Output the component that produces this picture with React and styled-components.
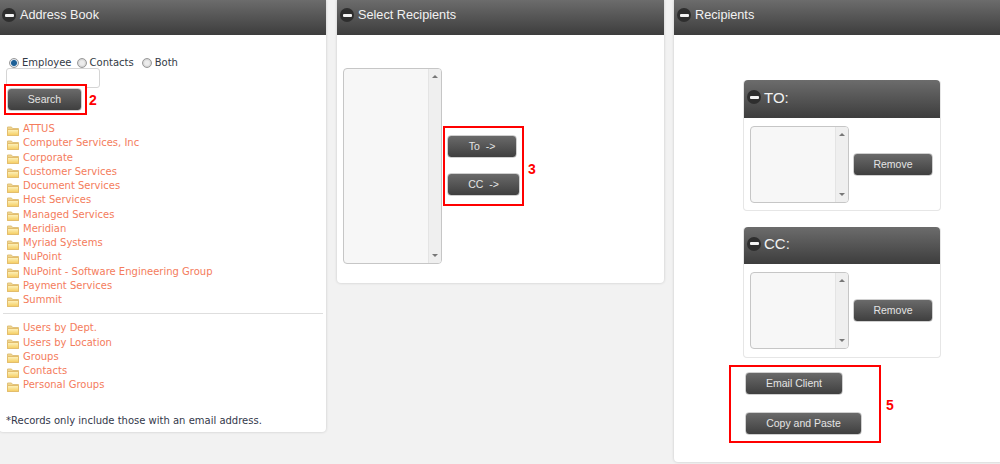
import React from 'react';
import styled, { createGlobalStyle } from 'styled-components';

const GlobalStyle = createGlobalStyle`
  html, body {
    margin: 0;
    padding: 0;
    height: 464px;
    overflow: hidden;
    background: #f2f2f2;
    font-family: 'DejaVu Sans', Verdana, sans-serif;
  }
`;

const Page = styled.div`
  display: flex;
  align-items: flex-start;
  gap: 10px;
  width: 1000px;
  height: 464px;
  overflow: hidden;
`;

// big panels

const Panel = styled.section`
  flex: 0 0 ${(props) => props.width}px;
  height: ${(props) => props.height}px;
  margin-left: ${(props) => props.offset || 0}px;
  background: #fff;
  border-radius: 0 0 4px 4px;
  box-shadow: 0 0 3px rgba(0, 0, 0, 0.18);
  display: flex;
  flex-direction: column;
`;

const PanelHeader = styled.header`
  flex: 0 0 35px;
  display: flex;
  align-items: center;
  gap: 4px;
  padding: 0 0 5px 3px;
  box-sizing: border-box;
  background: linear-gradient(#6c6c6c, #3d3d3d);
  color: #f2f2f2;
  font-family: 'Liberation Sans', Arial, sans-serif;
  font-size: 12.7px;
`;

const CollapseIcon = styled.span`
  flex: none;
  width: 14px;
  height: 14px;
  border-radius: 50%;
  background: #2e2e2e;
  display: flex;
  align-items: center;
  justify-content: center;
  &::after {
    content: '';
    width: 9px;
    height: 3px;
    border-radius: 1px;
    background: #f4f4f4;
  }
`;

const SmallHeader = styled(PanelHeader)`
  flex: 0 0 ${(props) => props.height}px;
  border-radius: 4px 4px 0 0;
  padding: 0 0 4px 3px;
  font-size: 15px;
  gap: 3px;
`;

// address book

const AddressBody = styled.div`
  display: flex;
  flex-direction: column;
  padding: 22px 3px 0 1px;
  font-size: 10px;
  color: #333a45;
`;

const RadioRow = styled.div`
  display: flex;
  align-items: center;
  height: 11px;
  padding-left: 9px;
`;

const RadioLabel = styled.label`
  display: flex;
  align-items: center;
  gap: 3px;
  margin-right: ${(props) => props.space}px;
`;

const Radio = styled.span`
  width: 10px;
  height: 10px;
  border-radius: 50%;
  box-sizing: border-box;
  border: 1px solid #999;
  background: ${(props) => (props.checked
    ? 'radial-gradient(circle, #1c5f96 0 2.5px, #dde5ee 3.5px)'
    : 'radial-gradient(circle, #ececec 0 2px, #c4c4c4 5px)')};
`;

const SearchInput = styled.input`
  display: block;
  width: 94px;
  height: 20px;
  box-sizing: border-box;
  margin: 0 0 0 6px;
  padding: 0;
  border: 1px solid #d5d5d5;
  border-radius: 3px;
  background: #fff;
`;

const SearchBox = styled.div`
  position: relative;
  display: flex;
  box-sizing: border-box;
  width: 83px;
  height: 31px;
  margin: -4px 0 0 4px;
  padding: 2px 0 0 1px;
  border: 2px solid #f00;
  background: #fff;
`;

const Button = styled.button`
  flex: none;
  width: ${(props) => props.width}px;
  height: 23px;
  padding: 0 0 2px;
  border: 1px solid #d0d0d0;
  border-radius: 4px;
  background: linear-gradient(#6a6a6a, #3f3f3f);
  color: #e4e4e4;
  font-family: 'Liberation Sans', Arial, sans-serif;
  font-size: 10.5px;
  text-align: center;
  white-space: pre;
`;

const Note = styled.span`
  position: absolute;
  left: calc(100% + ${(props) => props.gap}px);
  top: ${(props) => props.top}px;
  color: #f00;
  font-family: 'Liberation Sans', Arial, sans-serif;
  font-size: 14px;
  font-weight: 700;
  line-height: 14px;
`;

const TreeList = styled.ul`
  list-style: none;
  margin: ${(props) => props.top || 0}px 0 0;
  padding: 0 0 0 7px;
`;

const TreeItem = styled.li`
  display: flex;
  align-items: center;
  gap: 4px;
  height: 14.25px;
  color: #f47c5c;
  white-space: nowrap;
`;

const Divider = styled.hr`
  margin: 6px 0 7px 3px;
  border: 0;
  border-top: 1px solid #dedede;
`;

const Records = styled.p`
  margin: 22px 0 0 6px;
  line-height: 14px;
  color: #33384a;
  white-space: nowrap;
`;

// select recipients

const SelectBody = styled.div`
  display: flex;
  align-items: center;
  padding: 33px 0 0 6px;
`;

const ListBox = styled.div`
  flex: none;
  display: flex;
  justify-content: flex-end;
  width: 99px;
  height: ${(props) => props.height}px;
  box-sizing: border-box;
  border: 1px solid #c6c6c6;
  border-radius: 4px;
  background: #f7f7f7;
  overflow: hidden;
`;

const ScrollTrack = styled.div`
  width: 12px;
  display: flex;
  flex-direction: column;
  justify-content: space-between;
  align-items: center;
  padding: 6px 0;
  background: #efefef;
  border-left: 1px solid #e4e4e4;
`;

const Arrow = styled.span`
  width: 0;
  height: 0;
  border-left: 3px solid transparent;
  border-right: 3px solid transparent;
  ${(props) => (props.down
    ? 'border-top: 3px solid #777;'
    : 'border-bottom: 3px solid #777;')}
`;

const MoveBox = styled.div`
  position: relative;
  display: flex;
  flex-direction: column;
  gap: 15px;
  box-sizing: border-box;
  width: 81px;
  height: 80px;
  margin-left: 1px;
  padding: 7px 0 0 2px;
  border: 2px solid #f00;
`;

// recipients

const RecipientsBody = styled.div`
  display: flex;
  flex-direction: column;
  padding: 45px 0 0 69px;
`;

const SubPanel = styled.div`
  width: 198px;
  height: 131px;
  margin-bottom: 16px;
  box-sizing: border-box;
  display: flex;
  flex-direction: column;
  border: 1px solid #e6e6e6;
  border-top: 0;
  border-radius: 4px;
`;

const SubBody = styled.div`
  display: flex;
  align-items: center;
  gap: 4px;
  padding: 8px 0 0 6px;
`;

const ActionBox = styled.div`
  position: relative;
  display: flex;
  flex-direction: column;
  align-items: flex-start;
  gap: 17px;
  box-sizing: border-box;
  width: 152px;
  height: 78px;
  margin: -9px 0 0 -14px;
  padding: 5px 0 0 14px;
  border: 2px solid #f00;
`;

const FolderIcon = () => (
  <svg width="12" height="10" viewBox="0 0 12 10" style={{ flex: 'none', marginTop: 4 }}>
    <defs>
      <linearGradient id="folder-fill" x1="0" y1="0" x2="0" y2="1">
        <stop offset="0" stopColor="#fdf3c0" />
        <stop offset="1" stopColor="#f5cc5e" />
      </linearGradient>
    </defs>
    <path d="M0.5 1h4l1 1.5h6v7h-11z" fill="#f0d58c" stroke="#e0c27c" />
    <path d="M0.5 3.5h11v6h-11z" fill="url(#folder-fill)" stroke="#e3bd6c" />
  </svg>
);

const mainFolders = [
  'ATTUS',
  'Computer Services, Inc',
  'Corporate',
  'Customer Services',
  'Document Services',
  'Host Services',
  'Managed Services',
  'Meridian',
  'Myriad Systems',
  'NuPoint',
  'NuPoint - Software Engineering Group',
  'Payment Services',
  'Summit',
];

const otherFolders = ['Users by Dept.', 'Users by Location', 'Groups', 'Contacts', 'Personal Groups'];

function Folders({ items, top }) {
  return (
    <TreeList top={top}>
      {items.map((item) => (
        <TreeItem key={item}>
          <FolderIcon />
          {item}
        </TreeItem>
      ))}
    </TreeList>
  );
}

function Scrollable({ height }) {
  return (
    <ListBox height={height}>
      <ScrollTrack>
        <Arrow />
        <Arrow down />
      </ScrollTrack>
    </ListBox>
  );
}

function RecipientBox({ title, headerHeight }) {
  return (
    <SubPanel>
      <SmallHeader height={headerHeight}>
        <CollapseIcon />
        {title}
      </SmallHeader>
      <SubBody>
        <Scrollable height={77} />
        <Button width={80}>Remove</Button>
      </SubBody>
    </SubPanel>
  );
}

export default function App() {
  return (
    <Page>
      <GlobalStyle />
      <Panel width={327} height={432} offset={-1}>
        <PanelHeader>
          <CollapseIcon />
          Address Book
        </PanelHeader>
        <AddressBody>
          <RadioRow>
            <RadioLabel space={5}><Radio checked />Employee</RadioLabel>
            <RadioLabel space={8}><Radio />Contacts</RadioLabel>
            <RadioLabel space={0}><Radio />Both</RadioLabel>
          </RadioRow>
          <SearchInput />
          <SearchBox>
            <Button width={75}>Search</Button>
            <Note top={7} gap={4}>2</Note>
          </SearchBox>
          <Folders items={mainFolders} top={6.5} />
          <Divider />
          <Folders items={otherFolders} />
          <Records>*Records only include those with an email address.</Records>
        </AddressBody>
      </Panel>
      <Panel width={327} height={283} offset={1}>
        <PanelHeader>
          <CollapseIcon />
          Select Recipients
        </PanelHeader>
        <SelectBody>
          <Scrollable height={196} />
          <MoveBox>
            <Button width={70}>{'To  ->'}</Button>
            <Button width={73}>{'CC  ->'}</Button>
            <Note top={34} gap={6}>3</Note>
          </MoveBox>
        </SelectBody>
      </Panel>
      <Panel width={330} height={462}>
        <PanelHeader>
          <CollapseIcon />
          Recipients
        </PanelHeader>
        <RecipientsBody>
          <RecipientBox title="TO:" headerHeight={38} />
          <RecipientBox title="CC:" headerHeight={37} />
          <ActionBox>
            <Button width={98}>Email Client</Button>
            <Button width={117}>Copy and Paste</Button>
            <Note top={31} gap={7}>5</Note>
          </ActionBox>
        </RecipientsBody>
      </Panel>
    </Page>
  );
}
